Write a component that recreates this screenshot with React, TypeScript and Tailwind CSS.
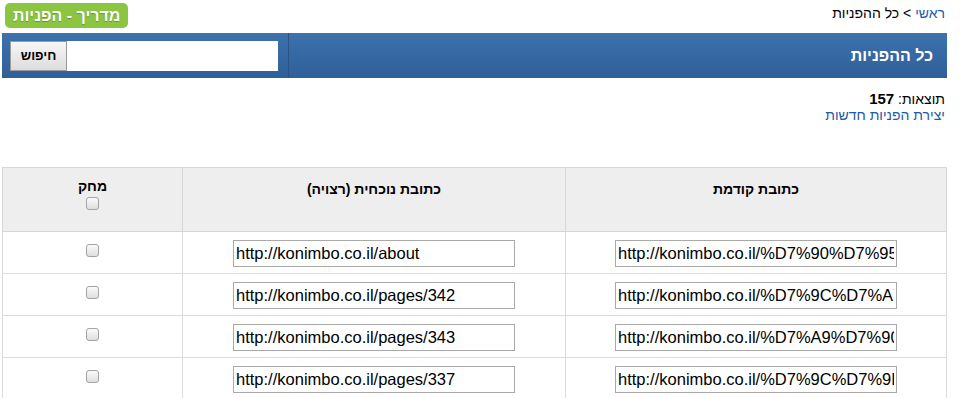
const rows = [
  { from: "http://konimbo.co.il/%D7%90%D7%95%D7%93%D7%95%D7%AA", to: "http://konimbo.co.il/about" },
  { from: "http://konimbo.co.il/%D7%9C%D7%A7%D7%95%D7%97%D7%95%D7%AA", to: "http://konimbo.co.il/pages/342" },
  { from: "http://konimbo.co.il/%D7%A9%D7%90%D7%9C%D7%95%D7%AA", to: "http://konimbo.co.il/pages/343" },
  { from: "http://konimbo.co.il/%D7%9C%D7%9E%D7%94", to: "http://konimbo.co.il/pages/337" },
];

function Check() {
  return (
    <input
      type="checkbox"
      className="appearance-none w-[13px] h-[13px] border border-[#a3a3a3] rounded-[3px] bg-linear-to-b from-[#fbfbfb] to-[#dedede] align-middle"
    />
  );
}

function UrlBox({ value }: { value: string }) {
  return (
    <input
      readOnly
      dir="ltr"
      value={value}
      className="w-[282px] h-[27px] border border-[#a9a9a9] bg-white px-[2px] text-[16.5px] text-black outline-none"
    />
  );
}

export default function App() {
  return (
    <div dir="rtl" className="w-[960px] h-[398px] overflow-hidden bg-white text-[13px] text-black" style={{ fontFamily: '"Liberation Sans", Arial, sans-serif' }}>
      <div className="w-[945px] mr-[13px]">
        <div className="h-[33px] flex items-start justify-between">
          <div className="pt-[3px] pr-[2px] text-[14px]">
            <a className="text-[#1c5aa8]">ראשי</a>
            <span> &gt; כל ההפניות</span>
          </div>
          <div className="mt-[3px] ml-[3px] h-[25px] px-[8px] rounded-[5px] bg-[#8cc541] text-white font-bold text-[16px] leading-[25px] [text-shadow:0_1px_1px_rgba(0,0,0,0.25)]">
            מדריך - הפניות
          </div>
        </div>

        <div className="h-[45px] flex items-center justify-between bg-linear-to-b from-[#3d72ad] to-[#2f5f98]">
          <div className="pr-[14px] text-white font-bold text-[16px]">כל ההפניות</div>
          <div className="flex items-center h-full">
            <div className="h-full w-[1px] bg-[#2a5488] ml-[10px]" />
            <input className="w-[211px] h-[30px] bg-white border-0 outline-none" />
            <button className="h-[30px] w-[57px] ml-[8px] bg-linear-to-b from-[#f7f7f7] to-[#dcdcdc] border border-[#9a9a9a] font-bold text-[13px] text-black">
              חיפוש
            </button>
          </div>
        </div>

        <div className="pt-[13px] pr-[2px] text-[14px] leading-[16px]">
          תוצאות: <b className="text-[15px]">157</b>
        </div>
        <div className="pr-[2px] text-[14px] leading-[16px]">
          <a className="text-[#1c5aa8]">יצירת הפניות חדשות</a>
        </div>

        <table className="mt-[44px] w-full border-collapse border border-[#dcdcdc]">
          <thead>
            <tr className="bg-[#eeeeee] h-[64px] align-top">
              <th className="w-[381px] border border-[#d6d6d6] pt-[11px] font-bold text-[14px]">כתובת קודמת</th>
              <th className="w-[383px] border border-[#d6d6d6] pt-[11px] font-bold text-[14px]">כתובת נוכחית (רצויה)</th>
              <th className="border border-[#d6d6d6] pt-[10px] font-bold text-[14px]">
                <div className="leading-[16px]">מחק</div>
                <div className="leading-[14px] mt-[1px]"><Check /></div>
              </th>
            </tr>
          </thead>
          <tbody>
            {rows.map((r) => (
              <tr key={r.to} className="h-[42px]">
                <td className="border border-[#dcdcdc] text-center align-middle pt-[1px]"><UrlBox value={r.from} /></td>
                <td className="border border-[#dcdcdc] text-center align-middle pt-[1px]"><UrlBox value={r.to} /></td>
                <td className="border border-[#dcdcdc] text-center align-top pt-[8px]"><Check /></td>
              </tr>
            ))}
          </tbody>
        </table>
      </div>
    </div>
  );
}
